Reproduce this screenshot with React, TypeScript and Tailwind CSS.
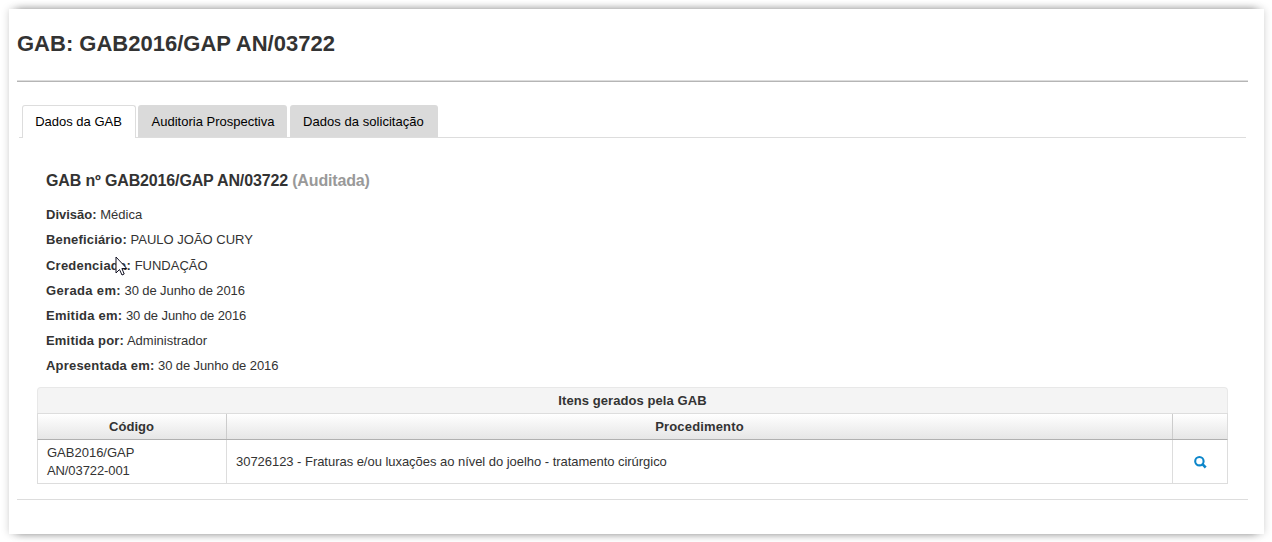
import React from "react";

const fields = [
  { label: "Divisão:", value: "Médica", labelTracking: "tracking-normal", valueTracking: "tracking-normal" },
  { label: "Beneficiário:", value: "PAULO JOÃO CURY", labelTracking: "tracking-[0.17px]", valueTracking: "tracking-normal" },
  { label: "Credenciada:", value: "FUNDAÇÃO", labelTracking: "tracking-[0.22px]", valueTracking: "tracking-normal" },
  { label: "Gerada em:", value: "30 de Junho de 2016", labelTracking: "tracking-[0.35px]", valueTracking: "tracking-[-0.1px]" },
  { label: "Emitida em:", value: "30 de Junho de 2016", labelTracking: "tracking-[0.25px]", valueTracking: "tracking-[-0.1px]" },
  { label: "Emitida por:", value: "Administrador", labelTracking: "tracking-[0.18px]", valueTracking: "tracking-normal" },
  { label: "Apresentada em:", value: "30 de Junho de 2016", labelTracking: "tracking-[0.2px]", valueTracking: "tracking-[-0.1px]" },
];

function Tabs() {
  return (
    <div className="ml-[2px] mt-[22px] flex h-[34px] w-[1227px] items-end gap-[3px] border-b border-[#ddd] pl-[3px] text-[13px] leading-[18px] text-black">
      <button className="-mb-px -mr-px h-[33px] w-[114px] whitespace-nowrap rounded-t-[3px] border border-b-0 border-[#ddd] bg-white pr-px">
        Dados da GAB
      </button>
      <button className="h-8 w-[149px] whitespace-nowrap rounded-t-[3px] bg-[#dadada] pl-px pt-px">
        Auditoria Prospectiva
      </button>
      <button className="h-8 w-[148px] whitespace-nowrap rounded-t-[3px] bg-[#dadada] pr-px pt-px tracking-[0.04px]">
        Dados da solicitação
      </button>
    </div>
  );
}

function ItemsTable() {
  return (
    <div className="ml-5 mt-[9px] w-[1191px] leading-[18px]">
      <div className="flex h-[26px] items-center justify-center rounded-t-[4px] border border-b-0 border-[#e8e8e8] bg-[#f4f4f4] font-bold tracking-[0.08px]">
        Itens gerados pela GAB
      </div>
      <div className="grid h-[27px] grid-cols-[189px_946px_54px] border border-[#ddd] border-b-[#b0b0b0] bg-linear-to-b from-white to-[#e6e6e6] text-center font-bold leading-[25px]">
        <div className="border-r border-[#ccc] pr-px">Código</div>
        <div className="border-r border-[#ccc] tracking-[0.15px]">Procedimento</div>
        <div />
      </div>
      <div className="grid h-11 grid-cols-[189px_946px_54px] border border-t-0 border-[#ddd]">
        <div className="flex items-center border-r border-[#ddd] pl-[9px]">
          <span>
            GAB2016/GAP
            <br />
            <span className="tracking-[-0.1px]">AN/03722-001</span>
          </span>
        </div>
        <div className="flex items-center border-r border-[#ddd] pl-[9px] tracking-[-0.037px]">
          30726123 - Fraturas e/ou luxações ao nível do joelho - tratamento cirúrgico
        </div>
        <div className="flex items-center justify-center pr-px">
          <svg width="14" height="14" viewBox="0 0 14 14" fill="none" stroke="#0c86ca" strokeWidth="2.1">
            <circle cx="6.4" cy="6.2" r="4.2" />
            <path d="M9.4 9.2 12.7 12.5" strokeWidth="2.6" />
          </svg>
        </div>
      </div>
    </div>
  );
}

export default function App() {
  return (
    <div className="h-[542px] w-[1272px] overflow-hidden bg-white pl-[9px] pt-[9px] font-['Liberation_Sans',Arial,sans-serif] text-[13px] text-[#333]">
      <main className="relative h-[525px] w-[1255px] bg-white pl-2 shadow-[0_0_8px_rgba(0,0,0,0.18),0_8px_8px_-8px_rgba(0,0,0,0.35),0_-8px_8px_-8px_rgba(0,0,0,0.35)]">
        <h1 className="flex h-[71px] items-center pb-px text-[22px] font-bold leading-[30px]">GAB: GAB2016/GAP AN/03722</h1>
        <div className="h-[2px] w-[1231px] border-b border-t border-b-[#b5b5b5] border-t-[#ddd]" />
        <Tabs />
        <section className="h-[362px] w-[1231px] border-b border-[#ddd] pt-[33px]">
          <h2 className="ml-[29px] text-[16px] font-bold leading-5 tracking-[-0.15px]">
            GAB nº GAB2016/GAP AN/03722 <span className="text-[#999]">(Auditada)</span>
          </h2>
          <div className="ml-[29px] mt-[11px] leading-[25.2px]">
            {fields.map((f) => (
              <p key={f.label} className={f.valueTracking + (f.label === "Credenciada:" ? " pt-px -mb-px" : "")}>
                <strong className={f.labelTracking}>{f.label}</strong> {f.value}
              </p>
            ))}
          </div>
          <ItemsTable />
        </section>
        <svg className="absolute left-[106px] top-[247px]" width="13" height="21" viewBox="0 0 13 21">
          <path d="M1 1V17L4.5 13.5L7 19L9.2 18L6.9 12.5H11.8Z" fill="white" stroke="#111122" strokeWidth="1" />
        </svg>
      </main>
    </div>
  );
}
